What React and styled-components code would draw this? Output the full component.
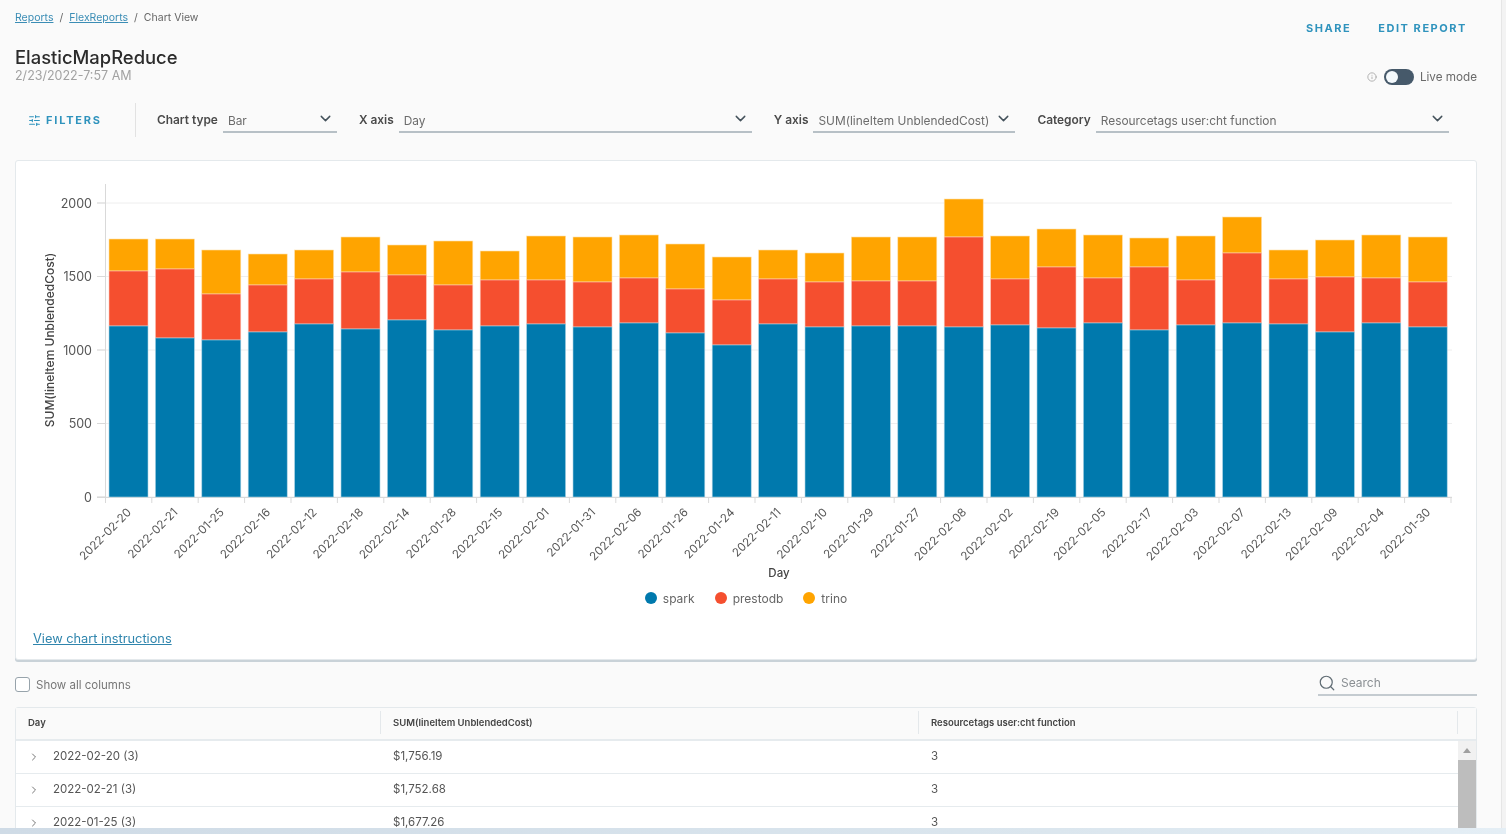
import styled, { createGlobalStyle } from "styled-components";
import { ChevronDown, ChevronRight, Info, Search, SlidersHorizontal } from "lucide-react";

const GlobalStyle = createGlobalStyle`
  html, body {
    margin: 0;
    padding: 0;
    background: #fafafa;
    font-family: Inter, "Open Sans", "Liberation Sans", sans-serif;
  }
  * {
    box-sizing: border-box;
  }
`;

// [day, top of spark, top of prestodb, top of trino] in chart pixels
const bars = [
  ["2022-02-20", 326, 271, 239],
  ["2022-02-21", 338, 269, 239],
  ["2022-01-25", 340, 294, 250],
  ["2022-02-16", 332, 285, 254],
  ["2022-02-12", 324, 279, 250],
  ["2022-02-18", 329, 272, 237],
  ["2022-02-14", 320, 275, 245],
  ["2022-01-28", 330, 285, 241],
  ["2022-02-15", 326, 280, 251],
  ["2022-02-01", 324, 280, 236],
  ["2022-01-31", 327, 282, 237],
  ["2022-02-06", 323, 278, 235],
  ["2022-01-26", 333, 289, 244],
  ["2022-01-24", 345, 300, 257],
  ["2022-02-11", 324, 279, 250],
  ["2022-02-10", 327, 282, 253],
  ["2022-01-29", 326, 281, 237],
  ["2022-01-27", 326, 281, 237],
  ["2022-02-08", 327, 237, 199],
  ["2022-02-02", 325, 279, 236],
  ["2022-02-19", 328, 267, 229],
  ["2022-02-05", 323, 278, 235],
  ["2022-02-17", 330, 267, 238],
  ["2022-02-03", 325, 280, 236],
  ["2022-02-07", 323, 253, 217],
  ["2022-02-13", 324, 279, 250],
  ["2022-02-09", 332, 277, 240],
  ["2022-02-04", 323, 278, 235],
  ["2022-01-30", 327, 282, 237],
];

const rows = [
  ["2022-02-20", "$1,756.19"],
  ["2022-02-21", "$1,752.68"],
  ["2022-01-25", "$1,677.26"],
];

const BLUE = "#0079ad";
const RED = "#f54f2f";
const ORANGE = "#ffa400";
const BASE = 497;
const STEP = 46.4;

const Chart = () => (
  <ChartSvg viewBox="16 161 1460 424">
    {[0, 500, 1000, 1500, 2000].map((v) => {
      const y = BASE - v * 0.147;
      return (
        <g key={v}>
          <line x1={97} x2={1452} y1={y} y2={y} stroke="#eeeeee" />
          <line x1={97} x2={105} y1={y} y2={y} stroke="#d9d9d9" />
          <text x={92} y={y + 4.5} textAnchor="end" fontSize="12.5" fill="#565656">{v}</text>
        </g>
      );
    })}
    <line x1={105.5} x2={105.5} y1={184} y2={503} stroke="#d9d9d9" />
    <line x1={97} x2={1452} y1={BASE + 0.5} y2={BASE + 0.5} stroke="#d9d9d9" />
    {bars.map(([day, spark, presto, trino], i) => {
      const x = 109 + i * STEP;
      return (
        <g key={day}>
          <line x1={x + 42.8} x2={x + 42.8} y1={BASE} y2={503} stroke="#d9d9d9" />
          <rect x={x} y={trino} width={39} height={presto - trino} fill={ORANGE} stroke="#ffe0a8" strokeWidth=".6" />
          <rect x={x} y={presto} width={39} height={spark - presto} fill={RED} stroke="#fbc9bd" strokeWidth=".6" />
          <rect x={x} y={spark} width={39} height={BASE - spark} fill={BLUE} stroke="#a9d2e4" strokeWidth=".6" />
          <text
            x={x + 23}
            y={513}
            textAnchor="end"
            fontSize="11.6"
            fill="#565656"
            transform={`rotate(-45 ${x + 23} 513)`}
          >
            {day}
          </text>
        </g>
      );
    })}
    <text x={779} y={577} textAnchor="middle" fontSize="11.5" fontWeight="500" fill="#444">Day</text>
    <text
      x={54}
      y={340}
      textAnchor="middle"
      fontSize="12"
      fontWeight="500"
      fill="#444"
      transform="rotate(-90 54 340)"
    >
      SUM(lineItem UnblendedCost)
    </text>
  </ChartSvg>
);

const Dropdown = ({ label, value, width }) => (
  <Field>
    <FieldLabel>{label}</FieldLabel>
    <Select $width={width}>
      <span>{value}</span>
      <ChevronDown size={17} color="#44525b" strokeWidth={2} />
    </Select>
  </Field>
);

const App = () => (
  <Page>
    <GlobalStyle />
    <Body>
      <Main>
        <Header>
          <div>
            <Crumbs>
              <CrumbLink>Reports</CrumbLink>
              <span>/</span>
              <CrumbLink>FlexReports</CrumbLink>
              <span>/</span>
              <span>Chart View</span>
            </Crumbs>
            <Title>ElasticMapReduce</Title>
            <Timestamp>2/23/2022-7:57 AM</Timestamp>
          </div>
          <HeaderRight>
            <Actions>
              <ActionButton>SHARE</ActionButton>
              <ActionButton>EDIT REPORT</ActionButton>
            </Actions>
            <LiveMode>
              <Info size={10} color="#a5a5a5" />
              <Toggle />
              <span>Live mode</span>
            </LiveMode>
          </HeaderRight>
        </Header>

        <FilterBar>
          <FilterButton>
            <SlidersHorizontal size={13} />
            FILTERS
          </FilterButton>
          <Divider />
          <Dropdown label="Chart type" value="Bar" width={114} />
          <Dropdown label="X axis" value="Day" width={353} />
          <Dropdown label="Y axis" value="SUM(lineItem UnblendedCost)" width={202} />
          <Dropdown label="Category" value="Resourcetags user:cht function" width={353} />
        </FilterBar>

        <Card>
          <Chart />
          <Legend>
            <LegendItem $color={BLUE}>spark</LegendItem>
            <LegendItem $color={RED}>prestodb</LegendItem>
            <LegendItem $color={ORANGE}>trino</LegendItem>
          </Legend>
          <ChartLink>View chart instructions</ChartLink>
        </Card>

        <TableTools>
          <ColumnsToggle>
            <Checkbox />
            Show all columns
          </ColumnsToggle>
          <SearchBox>
            <Search size={18} color="#5f6b73" strokeWidth={1.6} />
            Search
          </SearchBox>
        </TableTools>

        <Table>
          <HeadRow>
            <HeadCell>Day</HeadCell>
            <HeadCell>SUM(lineItem UnblendedCost)</HeadCell>
            <HeadCell>Resourcetags user:cht function</HeadCell>
            <HeadCell />
          </HeadRow>
          <TableBody>
            <div>
              {rows.map(([day, cost]) => (
                <Row key={day}>
                  <DayCell>
                    <ChevronRight size={12} color="#777" />
                    <span>{day} (3)</span>
                  </DayCell>
                  <Cell>{cost}</Cell>
                  <Cell>3</Cell>
                </Row>
              ))}
            </div>
            <Scrollbar>
              <ScrollArrow />
              <ScrollThumb />
            </Scrollbar>
          </TableBody>
        </Table>
      </Main>
      <RightEdge />
    </Body>
    <BottomEdge />
  </Page>
);

const Page = styled.div`
  width: 1506px;
  height: 834px;
  overflow: hidden;
  display: flex;
  flex-direction: column;
  background: #fafafa;
  filter: blur(0.5px);
`;

const Body = styled.div`
  flex: 1;
  min-height: 0;
  display: flex;
  overflow: hidden;
`;

const Main = styled.main`
  flex: 1;
  min-width: 0;
  padding: 12px 24px 0 15px;
`;

const RightEdge = styled.div`
  width: 5px;
  background: #f3f3f3;
  border-left: 1px solid #e6e6e6;
`;

const BottomEdge = styled.div`
  height: 6px;
  background: linear-gradient(90deg, #cfdbe6, #dbe6ee 70%, #e4eef5);
`;

const Header = styled.header`
  display: flex;
  justify-content: space-between;
  height: 91px;
`;

const Crumbs = styled.nav`
  display: flex;
  gap: 6px;
  font-size: 10.5px;
  line-height: 12px;
  color: #666;
`;

const CrumbLink = styled.a`
  color: #3b8db5;
  text-decoration: underline;
`;

const Title = styled.h1`
  margin: 22px 0 0;
  font-size: 18.4px;
  line-height: 22px;
  font-weight: 500;
  color: #2b2b2b;
`;

const Timestamp = styled.div`
  margin-top: 1px;
  font-size: 12.5px;
  line-height: 14px;
  color: #a2a2a2;
`;

const HeaderRight = styled.div`
  display: flex;
  flex-direction: column;
  align-items: flex-end;
`;

const Actions = styled.div`
  display: flex;
  gap: 27px;
  margin: 10px 10px 0 0;
`;

const ActionButton = styled.a`
  font-size: 11px;
  line-height: 12px;
  font-weight: 700;
  letter-spacing: 1.55px;
  color: #2f93bd;
`;

const LiveMode = styled.div`
  display: flex;
  align-items: center;
  gap: 7px;
  margin-top: 35px;
  font-size: 11.7px;
  line-height: 16px;
  color: #6a6a6a;
`;

const Toggle = styled.div`
  width: 30px;
  height: 16px;
  border-radius: 8px;
  background: #46596a;
  padding: 2px;
  margin-right: -1px;

  &::before {
    content: "";
    display: block;
    width: 12px;
    height: 12px;
    border-radius: 50%;
    background: #f4f9fc;
  }
`;

const FilterBar = styled.div`
  display: flex;
  align-items: center;
  height: 34px;
`;

const FilterButton = styled.button`
  display: flex;
  align-items: center;
  gap: 5px;
  width: 120px;
  padding: 0 0 0 13px;
  border: none;
  background: none;
  font: inherit;
  font-size: 11px;
  font-weight: 700;
  letter-spacing: 1.8px;
  color: #2f93bd;
`;

const Divider = styled.div`
  width: 1px;
  height: 34px;
  background: #e2e2e2;
  margin-right: 21px;
`;

const Field = styled.div`
  display: flex;
  align-items: center;
  gap: 5px;
  margin-right: 22px;
  padding-top: 2px;
`;

const FieldLabel = styled.label`
  font-size: 11.9px;
  font-weight: 600;
  line-height: 14px;
  color: #4a4a4a;
  white-space: nowrap;
  margin-top: -2px;
`;

const Select = styled.div`
  display: flex;
  align-items: center;
  justify-content: space-between;
  width: ${(p) => p.$width}px;
  height: 23px;
  padding: 0 3px 0 5px;
  border-bottom: 2px solid #b7c0c6;
  font-size: 11.9px;
  color: #6c6c6c;
  white-space: nowrap;

  svg {
    margin-top: -4px;
  }
`;

const Card = styled.section`
  height: 500px;
  margin-top: 23px;
  background: #fff;
  border: 1px solid #e4e9ec;
  border-radius: 3px;
  box-shadow: 0 2px 0 #c9d2d8;
`;

const ChartSvg = styled.svg`
  display: block;
  width: 1460px;
  height: 424px;
  font-family: Inter, "Liberation Sans", sans-serif;
`;

const Legend = styled.div`
  display: flex;
  justify-content: center;
  gap: 20px;
  height: 20px;
  margin-top: 3px;
`;

const LegendItem = styled.span`
  display: flex;
  align-items: center;
  gap: 6px;
  font-size: 12px;
  color: #666;

  &::before {
    content: "";
    width: 12px;
    height: 12px;
    border-radius: 50%;
    background: ${(p) => p.$color};
  }
`;

const ChartLink = styled.a`
  display: block;
  margin: 23px 0 0 17px;
  font-size: 12.8px;
  line-height: 16px;
  color: #2f85ad;
  text-decoration: underline;
`;

const TableTools = styled.div`
  display: flex;
  justify-content: space-between;
  align-items: flex-end;
  height: 36px;
`;

const ColumnsToggle = styled.label`
  display: flex;
  align-items: center;
  gap: 6px;
  height: 22px;
  font-size: 11.5px;
  color: #777;
`;

const Checkbox = styled.span`
  width: 15px;
  height: 15px;
  margin-top: -2px;
  border: 1.5px solid #97a3ab;
  border-radius: 3px;
  background: #fff;
`;

const SearchBox = styled.div`
  display: flex;
  align-items: center;
  gap: 5px;
  width: 159px;
  height: 24px;
  padding-bottom: 1px;
  border-bottom: 2px solid #c4cbd0;
  font-size: 12px;
  color: #8a8f93;
`;

const Table = styled.div`
  margin-top: 11px;
  background: #fff;
  border: 1px solid #e4e9ec;
  border-radius: 3px 3px 0 0;
`;

const HeadRow = styled.div`
  display: grid;
  grid-template-columns: 365px 538px 539px 1fr;
  align-items: center;
  height: 33px;
  padding-bottom: 2px;
  background: #fafafa;
  border-bottom: 2px solid #e6ebee;
`;

const HeadCell = styled.div`
  height: 23px;
  display: flex;
  align-items: center;
  padding-left: 12px;
  font-size: 9.5px;
  font-weight: 600;
  color: #444;
  border-right: 1px solid #e4e8eb;

  &:last-child {
    border-right: none;
  }
`;

const TableBody = styled.div`
  display: grid;
  grid-template-columns: 1fr 18px;
`;

const Row = styled.div`
  display: grid;
  grid-template-columns: 365px 538px 1fr;
  align-items: center;
  height: 33px;
  padding-bottom: 1px;
  border-bottom: 1px solid #e6ebee;
`;

const Cell = styled.div`
  padding-left: 12px;
  font-size: 11.5px;
  line-height: 11px;
  color: #555;
`;

const DayCell = styled(Cell)`
  display: flex;
  align-items: center;
  gap: 13px;
`;

const Scrollbar = styled.div`
  display: flex;
  flex-direction: column;
  background: #f1f1f1;
`;

const ScrollArrow = styled.div`
  height: 19px;
  display: flex;
  align-items: center;
  justify-content: center;

  &::before {
    content: "";
    border: 4.5px solid transparent;
    border-top: none;
    border-bottom: 5px solid #9f9f9f;
  }
`;

const ScrollThumb = styled.div`
  flex: 1;
  background: #bdbdbd;
`;

export default App;
